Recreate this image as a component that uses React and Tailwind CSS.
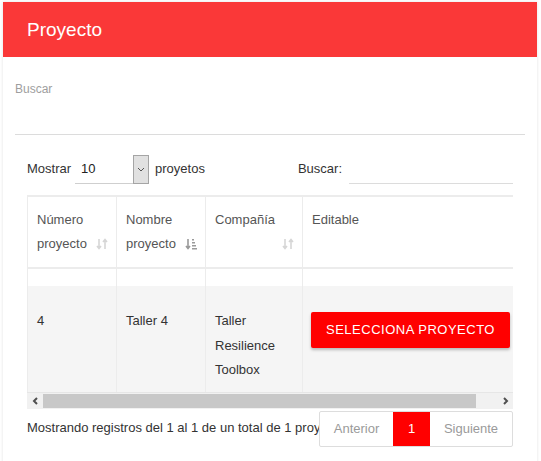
import React from 'react';

function SortBoth() {
  return (
    <svg width="12" height="12" viewBox="0 0 12 12" className="text-[#d6d6d6]">
      <path d="M3 1v9M1 8l2 2.5L5 8" stroke="currentColor" strokeWidth="1.6" fill="none" />
      <path d="M9 11V2M7 4l2-2.5L11 4" stroke="currentColor" strokeWidth="1.6" fill="none" />
    </svg>
  );
}

function SortDesc() {
  return (
    <svg width="12" height="12" viewBox="0 0 12 12" className="text-[#9a9a9a]">
      <path d="M3 1v9M1 8l2 2.5L5 8" stroke="currentColor" strokeWidth="1.6" fill="none" />
      <rect x="7" y="1" width="2" height="1.5" fill="currentColor" />
      <rect x="7" y="4" width="3" height="1.5" fill="currentColor" />
      <rect x="7" y="7" width="4" height="1.5" fill="currentColor" />
      <rect x="7" y="10" width="5" height="1.5" fill="currentColor" />
    </svg>
  );
}

const columns = [
  { label: ['Número', 'proyecto'], w: 'w-[89px]', icon: <SortBoth /> },
  { label: ['Nombre', 'proyecto'], w: 'w-[89px]', icon: <SortDesc /> },
  { label: ['Compañía'], w: 'w-[97px]', icon: <SortBoth /> },
  { label: ['Editable'], w: 'w-[232px]', icon: <SortDesc /> },
];

export default function App() {
  return (
    <div
      className="w-[541px] h-[461px] overflow-hidden bg-white text-[#333]"
      style={{ fontFamily: '"Liberation Sans", Arial, sans-serif' }}
    >
      <div className="ml-[3px] mt-[2px] w-[534px] h-[480px] bg-white shadow-[0_0_3px_rgba(0,0,0,0.12)]">
        {/* Cabecera */}
        <div className="h-[55px] bg-[#fa3838] pl-[24px] flex items-center">
          <h1 className="text-[19px] text-white leading-none">Proyecto</h1>
        </div>

        {/* Buscador superior */}
        <div className="px-[12px] pt-[25px]">
          <label className="block text-[12px] leading-[14px] text-[#9e9e9e]">Buscar</label>
          <div className="h-[39px] border-b border-[#dcdcdc]" />
        </div>

        <div className="px-[24px]">
          {/* Mostrar / Buscar */}
          <div className="mt-[19px] h-[30px] flex items-center text-[13px]">
            <span>Mostrar</span>
            <div className="relative ml-[4px] w-[74px] h-[29px] flex items-center">
              <div className="w-[58px] h-full border-b border-[#cfcfcf] flex items-center pl-[6px] text-[#222]">10</div>
              <div className="w-[16px] h-[29px] bg-[#e1e1e1] border border-[#a5a5a5] flex items-center justify-center">
                <svg width="8" height="5" viewBox="0 0 8 5">
                  <path d="M1 1l3 3 3-3" stroke="#555" strokeWidth="1" fill="none" />
                </svg>
              </div>
            </div>
            <span className="ml-[6px]">proyetos</span>
            <span className="ml-[93px]">Buscar:</span>
            <div className="ml-[7px] flex-1 h-[29px] border-b border-[#dcdcdc]" />
          </div>

          {/* Tabla */}
          <div className="mt-[11px] w-[486px] overflow-hidden">
            <div className="w-[507px] border-l border-t-2 border-[#ececec] text-[13px]">
              <div className="flex h-[72px] border-b-2 border-[#ececec] text-[#555]">
                {columns.map((c, i) => (
                  <div key={i} className={`relative ${c.w} shrink-0 border-r border-[#ececec] pl-[9px] pt-[11px] leading-[24px]`}>
                    {c.label.map((l) => (
                      <div key={l}>{l}</div>
                    ))}
                    <span className="absolute right-[8px] bottom-[17px]">{c.icon}</span>
                  </div>
                ))}
              </div>
              <div className="flex h-[17px]">
                {columns.map((c, i) => (
                  <div key={i} className={`${c.w} shrink-0 border-r border-[#ececec]`} />
                ))}
              </div>
              <div className="flex h-[106px] bg-[#f5f5f5] leading-[24.5px]">
                <div className="w-[89px] shrink-0 border-r border-[#ececec] pl-[9px] pt-[23px]">4</div>
                <div className="w-[89px] shrink-0 border-r border-[#ececec] pl-[9px] pt-[23px]">Taller 4</div>
                <div className="w-[97px] shrink-0 border-r border-[#ececec] pl-[9px] pt-[23px]">
                  <div>Taller</div>
                  <div>Resilience</div>
                  <div>Toolbox</div>
                </div>
                <div className="w-[232px] shrink-0 pl-[8px] pt-[26px]">
                  <button className="w-[199px] h-[36px] bg-[#ff0000] text-white text-[13px] tracking-[0.5px] uppercase rounded-[2px] shadow-[0_2px_3px_rgba(0,0,0,0.25)]">
                    Selecciona proyecto
                  </button>
                </div>
              </div>
            </div>

            {/* Barra de desplazamiento */}
            <div className="flex h-[17px] bg-[#f1f1f1] border-t border-[#e6e6e6]">
              <div className="w-[16px] flex items-center justify-center">
                <svg width="7" height="8" viewBox="0 0 7 8">
                  <path d="M5 1L2 4l3 3" stroke="#505050" strokeWidth="2" fill="none" />
                </svg>
              </div>
              <div className="w-[433px] my-[1px] bg-[#c8c8c8]" />
              <div className="flex-1" />
              <div className="w-[16px] flex items-center justify-center">
                <svg width="7" height="8" viewBox="0 0 7 8">
                  <path d="M2 1l3 3-3 3" stroke="#505050" strokeWidth="2" fill="none" />
                </svg>
              </div>
            </div>
          </div>

          {/* Pie */}
          <div className="mt-[2px] h-[36px] flex text-[13px]">
            <div className="w-[292px] overflow-hidden whitespace-nowrap pt-[7px]">
              Mostrando registros del 1 al 1 de un total de 1 proyectos
            </div>
            <div className="ml-auto h-[36px] flex bg-white border border-[#dddddd] rounded-[2px] text-[#9a9a9a]">
              <div className="w-[73px] flex items-center justify-center">Anterior</div>
              <div className="w-[37px] flex items-center justify-center bg-[#ff0000] text-white">1</div>
              <div className="w-[82px] flex items-center justify-center">Siguiente</div>
            </div>
          </div>
        </div>
      </div>
    </div>
  );
}
